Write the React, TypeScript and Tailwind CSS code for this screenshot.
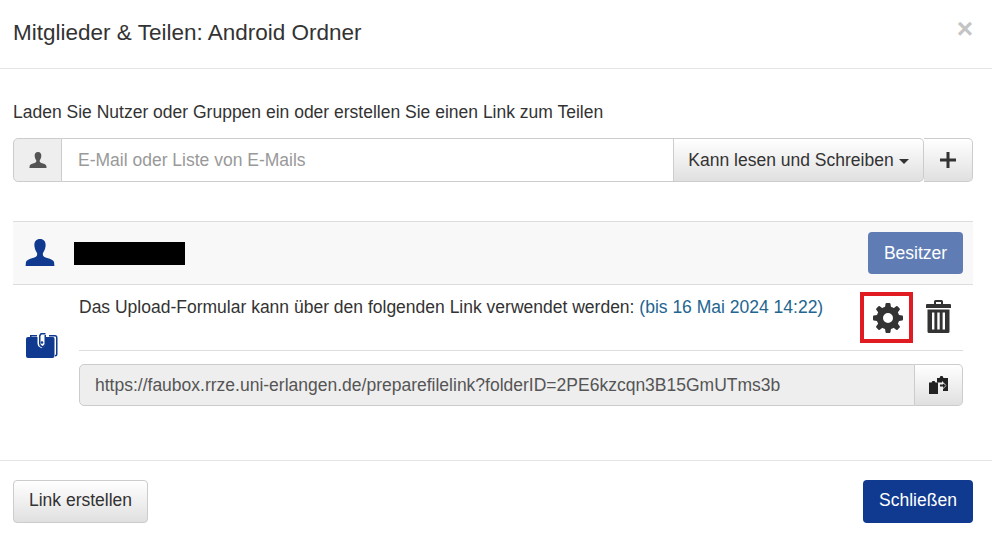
const UserIcon = ({ className }: { className: string }) => (
  <svg viewBox="0 0 32 30" className={className} fill="currentColor">
    <path d="M16 0c-4.600 0-6.600 3.400-6.200 7.600.3 3.200 1.200 5.600 2.600 7.400.6.8.6 2.200.2 3.200-.5 1.200-2 2-4.600 2.900C4 22.400 1 23.600.4 25.600L0 30h32l-.4-4.400c-.6-2-3.600-3.200-7.600-4.500-2.600-.9-4.100-1.700-4.600-2.900-.4-1-.4-2.400.2-3.200 1.400-1.800 2.300-4.200 2.600-7.400C22.600 3.400 20.600 0 16 0z" />
  </svg>
);

const GearIcon = () => (
  <svg viewBox="0 0 30 30" className="ml-[2px] h-[30px] w-[30px] text-[#333]" fill="currentColor">
    {[0, 45, 90, 135, 180, 225, 270, 315].map((a) => (
      <path key={a} d="M11.600 7 12.500.9a1 1 0 0 1 1-.9h3a1 1 0 0 1 1 .9l.9 6.100z" transform={`rotate(${a} 15 15)`} />
    ))}
    <circle cx="15" cy="15" r="8.200" fill="none" stroke="currentColor" strokeWidth="6.400" />
  </svg>
);

const TrashIcon = () => (
  <svg viewBox="0 0 25 33" className="h-[33px] w-[25px] text-[#333]" fill="currentColor">
    <path d="M9.500 0h6a1.500 1.500 0 0 1 1.500 1.500V4h7a1 1 0 0 1 1 1v3H0V5a1 1 0 0 1 1-1h7V1.500A1.500 1.500 0 0 1 9.500 0zm.500 2v2h5V2z" fillRule="evenodd" />
    <path d="M1.500 9.500h22v22a1.500 1.500 0 0 1-1.500 1.500H3a1.500 1.500 0 0 1-1.500-1.500zm4.500 3v17h2.400v-17zm5.300 0v17h2.400v-17zm5.300 0v17H19v-17z" fillRule="evenodd" />
  </svg>
);

const FolderIcon = () => (
  <svg viewBox="0 0 32 25" className="h-[25px] w-[32px] text-[#0f3a8f]" fill="currentColor">
    <path d="M4 2h7v1.500H5.500V4H4zM23 2h6a2.500 2.500 0 0 1 2.500 2.500V21a2.500 2.500 0 0 1-2.500 2.500v-1.500a1 1 0 0 0 1-1V4.500a1 1 0 0 0-1-1h-6z" />
    <path d="M2 4h9.500V10.500a4 4 0 0 0 2 3.500l2 1.200 2-1.200a4 4 0 0 0 2-3.500V4H27a1.500 1.500 0 0 1 1.500 1.500V23a2 2 0 0 1-2 2H2a2 2 0 0 1-2-2V6a2 2 0 0 1 2-2z" />
    <path d="M13 2.500 14 .8a1.500 1.500 0 0 1 1.300-.8h4.200v1.500h-4l-1 1.500v7.500a2.500 2.500 0 0 0 1.200 2.100l.8.500.8-.5a2.500 2.500 0 0 0 1.200-2.100V2h1.500v8.500a4 4 0 0 1-2 3.500l-1.500.9-1.500-.9a4 4 0 0 1-2-3.500z" />
    <circle cx="16" cy="9.500" r="1.300" />
  </svg>
);

const PasteIcon = () => (
  <svg viewBox="0 0 19 18" className="h-[18px] w-[19px] text-[#222]" fill="currentColor">
    <path d="M0 6.500h2.500L3.500 5h2l1 1.500H9V18H0z" />
    <path d="M8 2h2.500l1-2h2l1 2H19v13h-5V6.500H8z" />
    <path d="M10 7.500h3V5l4.500 4.500L13 14v-2.500h-3z" fill="#f0f0f0" />
    <path d="M11 8.500h3V7.500l3 2-3 2.500v-1.500h-3z" />
  </svg>
);

const btn = "border border-[#ccc] bg-gradient-to-b from-white to-[#e0e0e0] text-[#333] flex items-center justify-center";

export default function App() {
  return (
    <div className="flex h-[535px] w-[992px] flex-col overflow-hidden bg-white font-['Liberation_Sans',Arial,sans-serif] text-[17.500px] text-[#333]">
      <header className="flex h-[69px] shrink-0 items-center justify-between border-b border-[#e5e5e5] pb-[2px] pl-[13px] pr-[19px]">
        <h4 className="text-[22.500px] leading-none">Mitglieder &amp; Teilen: Android Ordner</h4>
        <span className="-mt-[8px] text-[28px] font-bold leading-none text-[#c4c4c4]">×</span>
      </header>

      <main className="flex-1 pl-[13px] pr-[19px] pt-[34px]">
        <p className="h-[17px] leading-[19px]">Laden Sie Nutzer oder Gruppen ein oder erstellen Sie einen Link zum Teilen</p>

        <div className="mt-[18px] flex h-[44px]">
          <div className="flex w-[49px] items-center justify-center rounded-l-[5px] border border-[#ccc] bg-[#eee]">
            <UserIcon className="h-[16px] w-[18px] text-[#555]" />
          </div>
          <div className="flex w-[612px] items-center border-y border-r border-[#ccc] px-4 text-[#999]">E-Mail oder Liste von E-Mails</div>
          <button className={`${btn} w-[250px] rounded-r-[5px] border-l-0`}>
            Kann lesen und Schreiben
            <span className="ml-[5px] mt-[2px] border-x-[5px] border-t-[5px] border-x-transparent border-t-[#333]" />
          </button>
          <button className={`${btn} w-[49px] rounded-r-[5px] border-l-0`}>
            <svg viewBox="0 0 16 16" className="h-[16px] w-[16px]" fill="currentColor"><path d="M6.500 0h3v6.500H16v3H9.500V16h-3V9.500H0v-3h6.500z" /></svg>
          </button>
        </div>

        <section className="mt-[39px] flex h-[63px] items-start border-t border-[#ddd] bg-[#f8f8f8] pl-[12px] pr-[10px] pt-[10px]">
          <UserIcon className="mt-[7px] h-[27px] w-[30px] text-[#0f3a8f]" />
          <div className="ml-[19px] mt-[10px] h-[23px] w-[111px] bg-black" />
          <button className="ml-auto h-[42px] w-[95px] rounded-[4px] bg-[#5f7db4] text-white">Besitzer</button>
        </section>

        <section className="flex h-[123px] border-t border-[#ddd] pr-[10px]">
          <div className="flex w-[66px] shrink-0 items-start pl-[13px] pt-[48px]">
            <FolderIcon />
          </div>
          <div className="flex-1">
            <div className="flex h-[66px] items-start border-b border-[#ddd]">
              <p className="mt-[12px] leading-[20px]">
                Das Upload-Formular kann über den folgenden Link verwendet werden: <span className="text-[#23658f]">(bis 16 Mai 2024 14:22)</span>
              </p>
              <div className="ml-auto mt-[7px] flex h-[51px] w-[53px] items-center justify-center border-[4px] border-[#e11b22]">
                <GearIcon />
              </div>
              <div className="ml-[13px] mr-[12px] mt-[15px]">
                <TrashIcon />
              </div>
            </div>
            <div className="mt-[13px] flex h-[42px]">
              <div className="flex flex-1 items-center rounded-l-[5px] border border-[#ccc] bg-[#eee] px-[15px] text-[#555]">
                https://faubox.rrze.uni-erlangen.de/preparefilelink?folderID=2PE6kzcqn3B15GmUTms3b
              </div>
              <button className={`${btn} w-[48px] rounded-r-[5px] border-l-0`}>
                <PasteIcon />
              </button>
            </div>
          </div>
        </section>
      </main>

      <footer className="flex h-[75px] shrink-0 items-start justify-between border-t border-[#e5e5e5] pl-[13px] pr-[19px] pt-[19px]">
        <button className={`${btn} h-[43px] w-[135px] rounded-[4px] pb-[2px]`}>Link erstellen</button>
        <button className="h-[43px] w-[110px] rounded-[4px] bg-[#0f3a8f] pb-[2px] text-white">Schließen</button>
      </footer>
    </div>
  );
}
